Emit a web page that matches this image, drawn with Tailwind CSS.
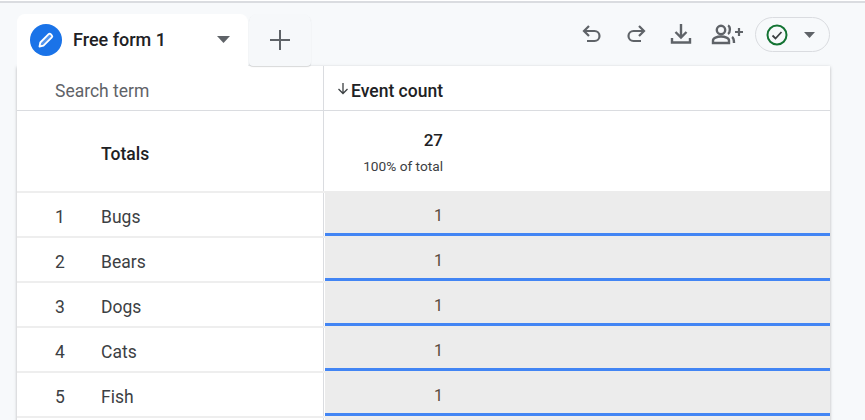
<!DOCTYPE html>
<html lang="en">
  <head>
    <meta charset="UTF-8" />
    <title>Free form 1</title>
    <script src="https://cdn.jsdelivr.net/npm/@tailwindcss/browser@4"></script>
  </head>
  <body class="h-[420px] overflow-hidden bg-[#f7f9fb] font-['Roboto',sans-serif] text-[#202124]">
    <div class="h-[3px] border-b-2 border-[#dadce0] bg-white"></div>

    <!-- Tabs + toolbar -->
    <div class="flex h-[63px] pl-[17px] pt-[11px]">
      <div class="flex h-[52px] w-[231px] items-center rounded-t-lg bg-white pb-[1px] pl-[13px]">
        <div class="flex h-8 w-8 items-center justify-center rounded-full bg-[#1a73e8]">
          <svg class="h-[18px] w-[18px]" viewBox="0 0 18 18" fill="none" stroke="#fff" stroke-width="1.8" stroke-linejoin="round">
            <path d="M2.500 15.500l.8-4 8.300-8.300a1.500 1.500 0 0 1 2.100 0l1.100 1.100a1.500 1.500 0 0 1 0 2.100L6.500 14.700z" fill="#fff" fill-opacity=".25"/>
          </svg>
        </div>
        <span class="ml-[11px] w-[144px] text-lg leading-6 font-medium text-[#202124]">Free form 1</span>
        <svg class="h-[7px] w-[13px]" viewBox="0 0 13 7"><path d="M0 0h13L6.500 7z" fill="#5f6368"/></svg>
      </div>
      <div class="ml-px flex h-[52px] w-[62px] items-center justify-center rounded-t-lg rounded-b-sm bg-[#f6f8fa] shadow-[0_1px_1px_rgba(60,64,67,.2)]">
        <svg class="h-[22px] w-[22px]" viewBox="0 0 22 22"><path d="M11 1v20M1 11h20" stroke="#5f6368" stroke-width="2"/></svg>
      </div>

      <div class="ml-[270px] flex h-[36px] items-start">
        <svg class="mt-[10px] h-[22px] w-[22px]" viewBox="0 0 22 22" fill="none" stroke="#5f6368" stroke-width="2.200"><path d="M8 2L3 7l5 5M3 7h10.500a5 5 0 0 1 0 10H6"/></svg>
        <svg class="ml-[22px] mt-[10px] h-[22px] w-[22px]" viewBox="0 0 22 22" fill="none" stroke="#5f6368" stroke-width="2.200"><path d="M14 2l5 5-5 5M19 7H8.500a5 5 0 0 0 0 10H16"/></svg>
        <svg class="ml-[23px] mt-[9px] h-[22px] w-[22px]" viewBox="0 0 22 22" fill="none" stroke="#5f6368" stroke-width="2.400"><path d="M11 1v13M5.500 9l5.500 5.500L16.500 9M2 15v4.500h18V15"/></svg>
        <svg class="ml-[19px] mt-[9px] h-[22px] w-[32px]" viewBox="0 0 32 22" fill="none" stroke="#5f6368" stroke-width="2.400">
          <circle cx="10" cy="7" r="4.200"/>
          <path d="M2 20v-2.500c0-2.500 4-4 8-4s8 1.500 8 4V20zM17 2.500c2.500 1 2.500 7 0 8.500M21 14c1.500 1 2 2 2 6"/>
          <path d="M24 9h8M28 5v8" stroke-width="2.200"/>
        </svg>
        <div class="ml-[12px] mt-[3px] flex h-[35px] w-[75px] items-center rounded-full border border-[#dadce0] pl-[10px]">
          <svg class="h-[22px] w-[22px]" viewBox="0 0 22 22" fill="none"><circle cx="11" cy="11" r="9.500" stroke="#137333" stroke-width="2"/><path d="M6.500 11.500l3 3 6-6.500" stroke="#3c4043" stroke-width="1.800"/></svg>
          <svg class="ml-[16px] h-[6px] w-[11px]" viewBox="0 0 11 6"><path d="M0 0h11L5.500 6z" fill="#5f6368"/></svg>
        </div>
      </div>
    </div>

    <!-- Table -->
    <div class="ml-[17px] w-[813px] bg-white shadow-[0_1px_3px_rgba(60,64,67,.35)]">
      <div class="flex h-[45px] border-b border-[#dadce0]">
        <div class="w-[307px] border-r border-[#dadce0] pl-[38px] text-[17.500px] leading-[50px] text-[#5f6368]">Search term</div>
        <div class="flex w-[119px] items-center justify-end pt-[7px] text-[17.500px] font-medium text-[#202124]">
          <svg class="mr-[2px] mb-[6px] h-[13px] w-[12px]" viewBox="0 0 12 13" fill="none" stroke="#3c4043" stroke-width="1.300"><path d="M6 1v10.500M1.500 7l4.500 4.500L10.500 7"/></svg>
          Event count
        </div>
      </div>

      <div class="flex h-[82px] border-b-2 border-[#eeeeee]">
        <div class="flex w-[307px] items-center border-r border-[#dadce0] pt-[6px] pl-[84px] text-[17.500px] font-medium">Totals</div>
        <div class="w-[119px] pt-[19px] text-right">
          <div class="text-[17px] leading-5 font-medium">27</div>
          <div class="mt-[7px] text-[13.700px] leading-[18px] text-[#3c4043]">100% of total</div>
        </div>
      </div>

      <!-- Rows -->
      <div class="flex h-[45px] border-b-2 border-[#eeeeee] text-[17.500px] text-[#3c4043]">
        <div class="flex w-[307px] items-center border-r border-[#dadce0] pt-[6px]"><span class="w-[84px] pl-[38px]">1</span><span>Bugs</span></div>
        <div class="mt-[-2px] ml-px h-[45px] w-[505px] border-b-[3px] border-[#4285f4] bg-[#ececec] pr-[387px] text-right text-base leading-[50px] text-[#5a4a3a]">1</div>
      </div>
      <div class="flex h-[45px] border-b-2 border-[#eeeeee] text-[17.500px] text-[#3c4043]">
        <div class="flex w-[307px] items-center border-r border-[#dadce0] pt-[6px]"><span class="w-[84px] pl-[38px]">2</span><span>Bears</span></div>
        <div class="mt-[-2px] ml-px h-[45px] w-[505px] border-b-[3px] border-[#4285f4] bg-[#ececec] pr-[387px] text-right text-base leading-[50px] text-[#5a4a3a]">1</div>
      </div>
      <div class="flex h-[45px] border-b-2 border-[#eeeeee] text-[17.500px] text-[#3c4043]">
        <div class="flex w-[307px] items-center border-r border-[#dadce0] pt-[6px]"><span class="w-[84px] pl-[38px]">3</span><span>Dogs</span></div>
        <div class="mt-[-2px] ml-px h-[45px] w-[505px] border-b-[3px] border-[#4285f4] bg-[#ececec] pr-[387px] text-right text-base leading-[50px] text-[#5a4a3a]">1</div>
      </div>
      <div class="flex h-[45px] border-b-2 border-[#eeeeee] text-[17.500px] text-[#3c4043]">
        <div class="flex w-[307px] items-center border-r border-[#dadce0] pt-[6px]"><span class="w-[84px] pl-[38px]">4</span><span>Cats</span></div>
        <div class="mt-[-2px] ml-px h-[45px] w-[505px] border-b-[3px] border-[#4285f4] bg-[#ececec] pr-[387px] text-right text-base leading-[50px] text-[#5a4a3a]">1</div>
      </div>
      <div class="flex h-[45px] border-b-2 border-[#eeeeee] text-[17.500px] text-[#3c4043]">
        <div class="flex w-[307px] items-center border-r border-[#dadce0] pt-[6px]"><span class="w-[84px] pl-[38px]">5</span><span>Fish</span></div>
        <div class="mt-[-2px] ml-px h-[45px] w-[505px] border-b-[3px] border-[#4285f4] bg-[#ececec] pr-[387px] text-right text-base leading-[50px] text-[#5a4a3a]">1</div>
      </div>
      <div class="flex h-[20px]">
        <div class="w-[307px] border-r border-[#dadce0]"></div>
        <div class="ml-px w-[505px] bg-[#ececec]"></div>
      </div>
    </div>
  </body>
</html>
